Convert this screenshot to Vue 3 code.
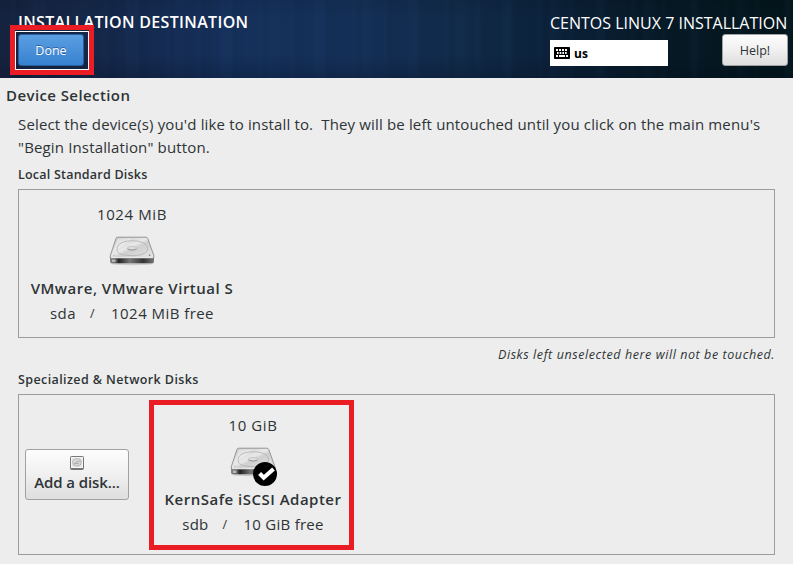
<script setup>
import { h } from 'vue'

const localDisks = [
  { size: '1024 MiB', name: 'VMware, VMware Virtual S', dev: 'sda', free: '1024 MiB free', selected: false },
]
const networkDisks = [
  { size: '10 GiB', name: 'KernSafe iSCSI Adapter', dev: 'sdb', free: '10 GiB free', selected: true },
]

const stop = (offset, color) => h('stop', { offset, 'stop-color': color })

// Hard drive seen in perspective: lid, platter outline and dark front edge
const DriveIcon = () =>
  h('svg', { width: 48, height: 32, viewBox: '0 0 48 32' }, [
    h('defs', [
      h('linearGradient', { id: 'lid', x1: 0, y1: 0, x2: 1, y2: 1 }, [
        stop(0, '#c2c2c2'), stop(0.45, '#e9e9e9'), stop(0.55, '#cfcfcf'), stop(1, '#e6e6e6'),
      ]),
      h('linearGradient', { id: 'edge', x1: 0, y1: 0, x2: 1, y2: 0 }, [
        stop(0, '#8a8a8a'), stop(0.15, '#555'), stop(0.2, '#222'), stop(0.45, '#777'), stop(0.75, '#333'), stop(1, '#777'),
      ]),
    ]),
    h('ellipse', { cx: 24, cy: 28.6, rx: 22, ry: 1.6, fill: '#000', opacity: 0.14 }),
    h('path', { d: 'M2 21.5 H46 V26.5 Q46 28.3 44 28.3 H4 Q2 28.3 2 26.5Z', fill: 'url(#edge)' }),
    h('path', { d: 'M9.5 2.2 H38 Q39.2 2.2 39.7 3.4 L46 21 Q46.3 23 44.5 23 H3.5 Q1.6 23 2.2 21 L8 3.4 Q8.4 2.2 9.5 2.2Z', fill: 'url(#lid)', stroke: '#8b8b8b', 'stroke-width': 0.9 }),
    h('path', { d: 'M10 3.4 H24 Q19 8 5 17Z', fill: '#fff', opacity: 0.35 }),
    h('path', { d: 'M9.5 16.5 C7 10 14 6 23 5.8 C33 5.6 40 8.5 39.5 14 C39 19 31 20.8 24 20.6 C17 20.4 11 19.5 9.5 16.5Z', fill: 'none', stroke: '#b0b0b0', 'stroke-width': 0.8 }),
    h('ellipse', { cx: 24, cy: 13.4, rx: 5, ry: 1.9, fill: '#dedede', stroke: '#b8b8b8', 'stroke-width': 0.7 }),
    h('path', { d: 'M19.5 14 Q24 16.2 28.5 14', fill: 'none', stroke: '#8c8c8c', 'stroke-width': 0.8 }),
    h('path', { d: 'M3.2 22.6 H44.8', stroke: '#fafafa', 'stroke-width': 0.8 }),
    h('path', { d: 'M4 24.5 H7.5 V27 H4Z', fill: '#b5b5b5' }),
    h('circle', { cx: 41.6, cy: 20.2, r: 0.8, fill: '#777' }),
    h('circle', { cx: 6, cy: 20.2, r: 0.6, fill: '#aaa' }),
  ])
</script>

<template>
  <div class="screen">
    <header class="header">
      <div class="left">
        <h1 class="title">INSTALLATION DESTINATION</h1>
        <div class="done-wrap">
          <button class="btn done">Done</button>
          <span class="mark mark-done"></span>
        </div>
      </div>
      <div class="right">
        <div class="product">CENTOS LINUX 7 INSTALLATION</div>
        <div class="tools">
          <div class="keyboard">
            <svg width="16" height="12" viewBox="0 0 16 12">
              <rect width="16" height="12" rx="0.8" fill="#000" />
              <path d="M2 3H14" stroke="#fff" stroke-width="2" stroke-dasharray="2 1" />
              <path d="M3 6H13.5" stroke="#fff" stroke-width="2" stroke-dasharray="1.6 1.1" />
              <path d="M2 9H4M5 9H11M12 9H14" stroke="#fff" stroke-width="1.8" />
            </svg>
            <span>us</span>
          </div>
          <button class="btn help">Help!</button>
        </div>
      </div>
    </header>

    <main class="content">
      <h2 class="heading">Device Selection</h2>
      <p class="intro">
        <span>Select the device(s) you'd like to install to. &nbsp;They will be left untouched until you click on the main menu's</span><br />
        <span>"Begin Installation" button.</span>
      </p>

      <h3 class="group local">Local Standard Disks</h3>
      <section class="panel panel-local">
        <div v-for="d in localDisks" :key="d.dev" class="disk disk-local">
          <div class="size">{{ d.size }}</div>
          <div class="drive"><DriveIcon /></div>
          <div class="name">{{ d.name }}</div>
          <div class="meta"><span>{{ d.dev }}</span><span class="slash">/</span><span>{{ d.free }}</span></div>
        </div>
      </section>
      <p class="note">Disks left unselected here will not be touched.</p>

      <h3 class="group network">Specialized &amp; Network Disks</h3>
      <section class="panel panel-network">
        <button class="btn add">
          <svg width="14" height="14" viewBox="0 0 14 14">
            <rect x="0.5" y="0.5" width="13" height="13" rx="0.8" fill="#e6e6e6" stroke="#777" />
            <path d="M1 12.6H13" stroke="#777" stroke-width="1.2" />
            <rect x="1.5" y="1.5" width="11" height="10" fill="none" stroke="#f6f6f6" />
            <ellipse cx="7" cy="6.3" rx="4.3" ry="3.6" fill="#dadada" stroke="#aaa" stroke-width="0.8" />
            <path d="M3.5 8.2Q7 4.5 10.5 5M5 7.6H9" fill="none" stroke="#9a9a9a" stroke-width="0.7" />
          </svg>
          <span>Add a disk...</span>
        </button>
        <div v-for="d in networkDisks" :key="d.dev" class="disk disk-network">
          <div class="size">{{ d.size }}</div>
          <div class="drive">
            <DriveIcon />
            <svg v-if="d.selected" class="check" width="24" height="24" viewBox="0 0 24 24">
              <circle cx="12" cy="12" r="12" fill="#000" />
              <path d="M6.6 11.6L10.7 15.7L20.5 7" fill="none" stroke="#fff" stroke-width="4.2" />
            </svg>
          </div>
          <div class="name">{{ d.name }}</div>
          <div class="meta meta-network"><span>{{ d.dev }}</span><span class="slash">/</span><span>{{ d.free }}</span></div>
        </div>
      </section>
    </main>
  </div>
</template>

<style>
body {
  margin: 0;
  background: #ededed;
}
</style>

<style scoped>
.screen {
  box-sizing: border-box;
  width: 793px;
  height: 564px;
  overflow: hidden;
  background: #ededed;
  color: #2e3436;
  font-family: "Open Sans", "Noto Sans", sans-serif;
  font-size: 15px;
  line-height: 20px;
  white-space: nowrap;
}
h1, h2, h3, p { margin: 0; }
svg { display: block; }

.header {
  display: flex;
  justify-content: space-between;
  box-sizing: border-box;
  height: 78px;
  padding: 12px 5px 0 18px;
  color: #fff;
  background:
    linear-gradient(180deg, rgba(0, 0, 0, 0.08), transparent 25%, transparent 70%, rgba(0, 5, 20, 0.2)),
    repeating-linear-gradient(90deg, rgba(70, 120, 190, 0) 0 9px, rgba(70, 120, 190, 0.02) 12px 14px, rgba(0, 0, 0, 0.03) 17px 19px, rgba(70, 120, 190, 0) 31px),
    repeating-linear-gradient(90deg, rgba(70, 120, 190, 0) 0 30px, rgba(70, 120, 190, 0.03) 34px 36px, rgba(70, 120, 190, 0) 47px),
    linear-gradient(90deg, #16233f 0, #14284b 14%, #15305b 30%, #142f56 45%, #102947 60%, #0b2139 70%, #061a27 82%, #03151b 100%);
}
.title {
  font-size: 16px;
  font-weight: 600;
  line-height: 20px;
  letter-spacing: 0.33px;
}
.done-wrap {
  position: relative;
  width: 66px;
  margin-top: 2px;
}
.btn {
  display: flex;
  align-items: center;
  justify-content: center;
  box-sizing: border-box;
  padding: 2px 0 0;
  border-radius: 3px;
  font-family: inherit;
  font-size: 12.5px;
  line-height: 18px;
  color: #2e3436;
  border: 1px solid #a1a1a1;
  background: linear-gradient(#fdfdfd, #f0f0f0 50%, #dedede);
}
.done {
  width: 66px;
  height: 32px;
  color: #fff;
  border-color: #2a5e9c;
  background: linear-gradient(#5a9fe2, #4a90d9 50%, #3581d0);
  text-shadow: 0 -1px rgba(20, 60, 110, 0.6);
}
.mark {
  position: absolute;
  box-sizing: border-box;
  border: 5px solid #ea1c24;
  pointer-events: none;
}
.mark-done {
  left: -8px;
  top: -9px;
  width: 84px;
  height: 50px;
}
.mark-done::after {
  content: "";
  position: absolute;
  inset: 1px 0 0 0;
  border: 1px solid #fff;
}
.right { width: 238px; }
.product {
  padding-top: 1px;
  font-size: 16px;
}
.tools {
  display: flex;
  justify-content: space-between;
  align-items: flex-start;
  margin-top: 1px;
}
.keyboard {
  display: flex;
  align-items: center;
  gap: 4px;
  box-sizing: border-box;
  width: 118px;
  height: 26px;
  margin-top: 6px;
  padding-left: 4px;
  background: #fff;
  color: #000;
  font-size: 12px;
  font-weight: 700;
  line-height: 18px;
}
.keyboard span { padding-top: 2px; }
.help {
  width: 66px;
  height: 32px;
}

.content { padding: 7px 18px 0; }
.heading {
  margin-left: -12px;
  font-size: 15px;
  font-weight: 600;
  line-height: 20px;
  letter-spacing: 0.41px;
}
.intro {
  margin-top: 8px;
  line-height: 23px;
  letter-spacing: 0.15px;
}
.group {
  font-size: 12.5px;
  font-weight: 600;
  line-height: 18px;
}
.local { margin-top: 7px; letter-spacing: 0.22px; }
.network { margin-top: 7px; letter-spacing: 0.4px; }
.panel {
  display: flex;
  box-sizing: border-box;
  width: 757px;
  margin-top: 5px;
  border: 1px solid #9c9c9c;
}
.panel-local {
  height: 149px;
  padding: 14px 0 0 11px;
}
.panel-network {
  height: 161px;
  padding: 5px 0 0 6px;
}
.disk {
  display: flex;
  flex-direction: column;
  align-items: center;
}
.disk-local { width: 204px; }
.disk-network {
  box-sizing: border-box;
  width: 205px;
  height: 150px;
  margin-left: 20px;
  padding: 10px 0 0 3px;
  border: 5px solid #ea1c24;
}
.size { letter-spacing: 0.6px; }
.drive {
  position: relative;
  height: 32px;
  margin-top: 11px;
}
.check {
  position: absolute;
  left: 24px;
  top: 16px;
}
.name {
  margin-top: 11px;
  font-weight: 600;
  letter-spacing: 0.49px;
}
.meta {
  display: flex;
  margin-top: 5px;
  letter-spacing: 0.45px;
}
.slash {
  margin: 0 16px 0 14px;
  padding-top: 1px;
  font-size: 12.5px;
}
.meta-network { letter-spacing: 0.27px; }
.add {
  flex-direction: column;
  justify-content: flex-start;
  width: 104px;
  height: 51px;
  margin-top: 49px;
  padding-top: 6px;
  font-size: 15px;
  font-weight: 600;
  line-height: 20px;
  letter-spacing: -0.1px;
}
.add span { margin-top: 2px; }
.note {
  width: 757px;
  margin-top: 8px;
  font-size: 12.5px;
  font-style: italic;
  line-height: 18px;
  letter-spacing: 0.58px;
  text-align: right;
}
</style>
